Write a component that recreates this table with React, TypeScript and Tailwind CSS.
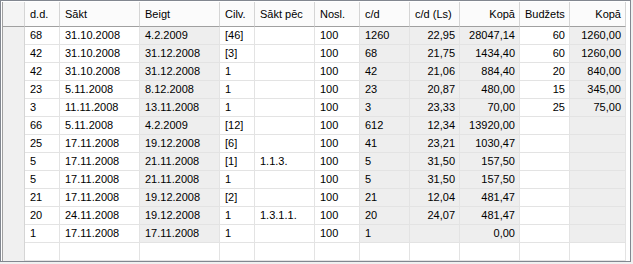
import React from 'react';

type Col = { title: string; width: string; head: 'l' | 'r'; cell: 'l' | 'r'; shaded?: boolean };

const cols: Col[] = [
   { title: 'd.d.', width: 'w-[35px]', head: 'l', cell: 'l' },
   { title: 'Sākt', width: 'w-[80px]', head: 'l', cell: 'l' },
   { title: 'Beigt', width: 'w-[80px]', head: 'l', cell: 'l', shaded: true },
   { title: 'Cilv.', width: 'w-[35px]', head: 'l', cell: 'l' },
   { title: 'Sākt pēc', width: 'w-[60px]', head: 'l', cell: 'l' },
   { title: 'Nosl.', width: 'w-[45px]', head: 'l', cell: 'l' },
   { title: 'c/d', width: 'w-[50px]', head: 'l', cell: 'l', shaded: true },
   { title: 'c/d (Ls)', width: 'w-[50px]', head: 'l', cell: 'r', shaded: true },
   { title: 'Kopā', width: 'w-[60px]', head: 'r', cell: 'r', shaded: true },
   { title: 'Budžets', width: 'w-[50px]', head: 'l', cell: 'r' },
   { title: 'Kopā', width: 'w-[56px]', head: 'r', cell: 'r', shaded: true },
];

const rows: string[][] = [
   ['68', '31.10.2008', '4.2.2009', '[46]', '', '100', '1260', '22,95', '28047,14', '60', '1260,00'],
   ['42', '31.10.2008', '31.12.2008', '[3]', '', '100', '68', '21,75', '1434,40', '60', '1260,00'],
   ['42', '31.10.2008', '31.12.2008', '1', '', '100', '42', '21,06', '884,40', '20', '840,00'],
   ['23', '5.11.2008', '8.12.2008', '1', '', '100', '23', '20,87', '480,00', '15', '345,00'],
   ['3', '11.11.2008', '13.11.2008', '1', '', '100', '3', '23,33', '70,00', '25', '75,00'],
   ['66', '5.11.2008', '4.2.2009', '[12]', '', '100', '612', '12,34', '13920,00', '', ''],
   ['25', '17.11.2008', '19.12.2008', '[6]', '', '100', '41', '23,21', '1030,47', '', ''],
   ['5', '17.11.2008', '21.11.2008', '[1]', '1.1.3.', '100', '5', '31,50', '157,50', '', ''],
   ['5', '17.11.2008', '21.11.2008', '1', '', '100', '5', '31,50', '157,50', '', ''],
   ['21', '17.11.2008', '19.12.2008', '[2]', '', '100', '21', '12,04', '481,47', '', ''],
   ['20', '24.11.2008', '19.12.2008', '1', '1.3.1.1.', '100', '20', '24,07', '481,47', '', ''],
   ['1', '17.11.2008', '17.11.2008', '1', '', '100', '1', '', '0,00', '', ''],
];

const App = () => {
   return (
      <div
         className="h-[264px] w-[633px] bg-[#f0f0f0] text-[11px] leading-none text-black"
         style={{ fontFamily: '"Liberation Sans", Arial, sans-serif' }}>
         <div className="h-[262px] w-[631px] overflow-hidden border border-[#828790] bg-white pl-px pt-px">
            {/* header */}
            <div className="flex h-[25px]">
               <div className="h-full w-[23px] shrink-0 border-r border-b border-l border-r-[#d5d5d5] border-b-[#a0a0a0] border-l-[#a0a0a0] bg-[#f4f4f4]" />
               {cols.map((c, i) => (
                  <div
                     key={i}
                     className={`flex h-full shrink-0 items-center border-r border-b border-r-[#d5d5d5] border-b-[#a0a0a0] bg-[#fbfbfb] pr-[4px] pl-[5px] ${c.width} ${c.head === 'r' ? 'justify-end' : 'justify-start'}`}>
                     {c.title}
                  </div>
               ))}
            </div>
            {/* data rows */}
            {rows.map((r, ri) => (
               <div key={ri} className="flex h-[18px]">
                  <div className="h-full w-[23px] shrink-0 border-r border-l border-r-[#d5d5d5] border-l-[#a0a0a0] bg-[#f0f0f0]" />
                  {cols.map((c, i) => (
                     <div
                        key={i}
                        className={`flex h-full shrink-0 items-center border-r border-b border-[#e3e3e3] pr-[4px] pl-[5px] ${c.width} ${c.cell === 'r' ? 'justify-end' : 'justify-start'} ${c.shaded ? 'bg-[#eeeeee]' : 'bg-white'}`}>
                        {r[i]}
                     </div>
                  ))}
               </div>
            ))}
            {/* new row */}
            <div className="flex h-[18px]">
               <div className="h-full w-[23px] shrink-0 border-r border-l border-r-[#d5d5d5] border-l-[#a0a0a0] bg-[#f0f0f0]" />
               {cols.map((c, i) => (
                  <div key={i} className={`h-full shrink-0 border-r border-b border-[#e3e3e3] bg-white ${c.width}`} />
               ))}
            </div>
         </div>
      </div>
   );
};

export default App;
